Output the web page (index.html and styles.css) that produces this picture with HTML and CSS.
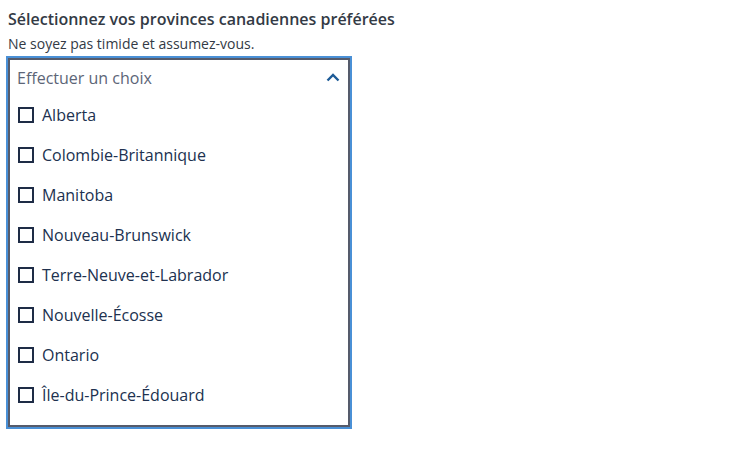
FILE: index.html
```html
<!DOCTYPE html>
<html lang="fr">
<head>
<meta charset="utf-8">
<link rel="stylesheet" href="styles.css">
</head>
<body>
<div class="field">
  <div class="label">Sélectionnez vos provinces canadiennes préférées</div>
  <div class="hint">Ne soyez pas timide et assumez-vous.</div>
  <div class="select">
    <div class="select-head">
      <span class="placeholder">Effectuer un choix</span>
      <svg class="chev" width="14" height="9" viewBox="0 0 14 9"><path d="M1.5 7.5 L7 2 L12.5 7.5" fill="none" stroke="#1d5b97" stroke-width="2.4"/></svg>
    </div>
    <ul class="options">
      <li class="opt"><span class="box"></span><span>Alberta</span></li>
      <li class="opt"><span class="box"></span><span>Colombie-Britannique</span></li>
      <li class="opt"><span class="box"></span><span>Manitoba</span></li>
      <li class="opt"><span class="box"></span><span>Nouveau-Brunswick</span></li>
      <li class="opt"><span class="box"></span><span>Terre-Neuve-et-Labrador</span></li>
      <li class="opt"><span class="box"></span><span>Nouvelle-Écosse</span></li>
      <li class="opt"><span class="box"></span><span>Ontario</span></li>
      <li class="opt"><span class="box"></span><span>Île-du-Prince-Édouard</span></li>
    </ul>
  </div>
</div>
</body>
</html>
```
FILE: styles.css
```css
html, body { margin: 0; padding: 0; background: #fff; }
body { font-family: "Open Sans", "Noto Sans", sans-serif; }
.field { display: flex; flex-direction: column; padding: 9px 0 0 6px; width: 346px; }
.label { font-size: 16px; font-weight: 600; line-height: 20px; color: #333a45; padding-left: 2px; white-space: nowrap; }
.hint { font-size: 14px; line-height: 18px; color: #333a45; padding-left: 2px; margin-top: 6px; }
.select { margin-top: 3px; border: 2px solid #4a90d6; box-shadow: inset 0 0 0 2px #555b6b; padding: 2px; }
.select-head { height: 35px; display: flex; align-items: center; justify-content: space-between; padding: 0 8px 0 7px; }
.placeholder { font-size: 16px; color: #5c6577; line-height: 22px; }
.chev { display: block; margin-top: -1px; }
.options { list-style: none; margin: 0; padding: 0 0 10px 0; }
.opt { height: 40px; display: flex; align-items: center; padding-left: 8px; gap: 8px; font-size: 16px; color: #20314f; }
.box { width: 12px; height: 12px; border: 2px solid #1e2c46; flex: none; }
```
